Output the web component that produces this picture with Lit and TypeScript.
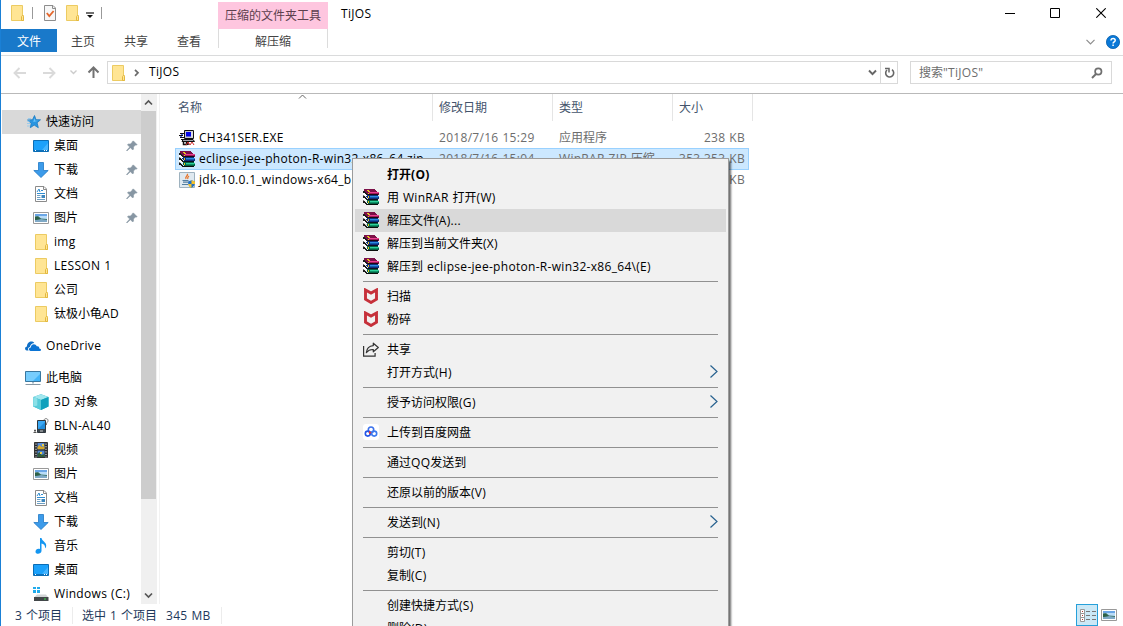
import { LitElement, html, svg, css, nothing } from "lit";
import { customElement } from "lit/decorators.js";
import { classMap } from "lit/directives/class-map.js";

const frame = (body: unknown, w = 16, h = 16) =>
  html`<svg width=${w} height=${h} viewBox="0 0 ${w} ${h}" fill="none">${body}</svg>`;

// Latin runs are tracked slightly wider than the Chinese glyphs beside them.
const text = (s: string) =>
  s.split(/([\x20-\x7e]+)/).map((part, i) => (i % 2 ? html`<span class="latin">${part}</span>` : part));

const latinStyles = css`
  .latin { letter-spacing: .3px; word-spacing: .5px; white-space: pre; }
`;

const folder = svg`<path d="M2.5 .5h11v10h1v5h-12z" fill="#ffe79c" stroke="#eccb62"/><path d="M3 1h10v9l-1 1v4H3z" fill="#ffe594"/><path d="M12.5 15.5v-4l1-1.2 1 1.2v4z" fill="#ffe594" stroke="#e3b83f"/>`;

const books = svg`
  <g shape-rendering="crispEdges">
    <path d="M1 0h11v1h1v1h1v1h2v3H5V5H4V4H3V3H2V2H1z" fill="#7c1048"/>
    <path d="M6 3h10v1H6z" fill="#e8408f"/><path d="M6 4h9v1H6z" fill="#a3185c"/>
    <path d="M5 5h10v1H5z" fill="#1a0a12"/>
    <path d="M3 6h12v1h1v3H5V9H4V8H3z" fill="#0c2f7c"/><path d="M7 7h9v1H7z" fill="#2b8ee0"/><path d="M7 8h8v1H7z" fill="#1558ae"/>
    <path d="M5 10h10v1H5z" fill="#0a0f22"/>
    <path d="M4 11h11v1h1v3H5v-1H4z" fill="#066144"/><path d="M7 12h9v1H7z" fill="#2fd09a"/><path d="M7 13h8v1H7z" fill="#0d9468"/>
    <path d="M4 15h11v1H4z" fill="#0a0f0c"/>
    <path d="M0 2h2v1h1v1h1v1h1v1H3V5H2V4H0zM0 7h2v1h1v1h1v1h1v1H3v-1H2V9H0zM0 12h2v1h1v1h1v2H3v-1H2v-1H0z" fill="#1c1c1c"/>
    <path d="M0 4h2v1h1v1h1v1H2V6H0zM0 9h2v1h1v1h1v1H2v-1H0z" fill="#fff"/>
    <path d="M0 6h1v1H0zM0 11h1v1H0z" fill="#777"/>
    <path d="M4 1h2v1H4zM5 2h2v1H5zM5 4h1v1H5zM5 7h1v2H5zM5 12h1v2H5z" fill="#e8c81e"/>
  </g>`;

const shield = svg`<path d="M2.500 2v9.200L8 14.500l5.500-3.300V2L8 5z" stroke="#c6303a" stroke-width="2.900" stroke-linejoin="miter"/>`;

const picture = svg`<path d="M.5 2.500h15v11H.5z" fill="#fff" stroke="#999"/><path d="M2 4h12v8H2z" fill="#b9dcf8"/><path d="M2 4h12v2H2z" fill="#6ba6e6"/><path d="m2 7 3-1 3 2.500 6 .5v1H2z" fill="#3c7463"/><path d="M2 10 8 9l6 1v2H2z" fill="#7fa9c6"/><path d="M2 6.500c4 0 4 2 6 2.500l-6 1z" fill="#2c6048"/>`;

const icons: Record<string, unknown> = {
  folder,
  books,
  shield,
  picture,
  star: svg`<path d="m9.500 1.500 1.500 4.200 4.500.1-3.400 3 1.200 4.900-4.100-2.600-3.900 2.600.9-4.500L2.500 6l5-.3z" fill="#2a95e0" stroke="#1b7cc4" stroke-width=".8"/><path d="M3 4.500h3M2 7h3M2 9.500h3M2 12h3" stroke="#8cc8f0" stroke-width=".8"/><path d="m9.300 4 1 2.700 3 .1-5 1.200z" fill="#6cc5fa"/>`,
  desktop: svg`<path d="M.5 2.500h15v11H.5z" fill="#1ba1fb" stroke="#0b6db5"/><path d="M9 12 15 5v7z" fill="#45b5ff"/><path d="M1 12.500h14" stroke="#0c72bd"/><path d="M2 12.500h1M11 12.500h1M13 12.500h1" stroke="#fff"/>`,
  download: svg`<path d="M5.500.5h5v8h4.700L8 15.500.8 8.500h4.700z" fill="#3c9bea" stroke="#2179c5" stroke-width=".8"/>`,
  document: svg`<path d="M2.500.5h8.500l2.500 2.500v12.500h-11z" fill="#fff" stroke="#8b8b8b"/><path d="M10.500.5v3h3" stroke="#8b8b8b"/><path d="m4 6 2-3 1 3M8 4.500h2M4 7.500h8" stroke="#2f8cd0"/><path d="M4 9.500h3.500M4 11.500h3.500M4 13.500h8" stroke="#6c9fc4"/><path d="M8.500 9h3.500v3H8.500z" fill="#3c86bd"/>`,
  cloud: svg`<path d="M1.800 12.500C-.8 12 -.3 8.600 2 8.500 2 4 7 2 9.300 5.100 6.500 5 5 7.500 5 9 3 9.300 2.600 11.300 3.600 12.500z" fill="#0f6fc6"/><path d="M5.600 13c-2.500-.3-2-3.400.2-3.500.2-3.800 4.700-4.600 6-1.200 2-.3 2.600 1 2.500 2.100 2.300.2 2.200 2.600.4 2.600z" fill="#0b74d4"/>`,
  computer: svg`<path d="M.5 1.500h15v10H.5z" fill="#43b4f8" stroke="#39779f"/><path d="m8 11 7-7V2H1v9z" fill="#77cdfd"/><path d="M7 12h2v1.500H7z" fill="#a9bdc9"/><path d="M.5 14.500h15" stroke="#8797a3"/>`,
  cube: svg`<path d="M8 .2 15.500 3v9.500L8 16 .3 12.500V3z" fill="#29b2c9"/><path d="M8 .2 15.500 3 8 6 .3 3z" fill="#a2e7ee"/><path d="M.3 3 8 6v10L.3 12.500z" fill="#57cbd9"/><path d="M8 6 15.500 3v9.500L8 16z" fill="#0fa0bc"/><path d="m.3 3 4 1.500v7l-4 1z" fill="#8be0e7"/>`,
  device: svg`<path d="M11 4V2.500C11 0 15 0 15 2.500c0 2-1.500 1.500-1.500 3.500v1" stroke="#777"/><path d="M4.500 2.500h8v12h-8z" fill="#3a444c" stroke="#30383f"/><path d="M5 3h7v8H5z" fill="#3aa8f4"/><path d="m5 11 7-7v7z" fill="#208cdb"/><path d="M7 13h3" stroke="#ccc"/><path d="M.5 14.500h3M2 11.500v3M1 12.500h2" stroke="#555"/>`,
  video: svg`<path d="M1.500.5h13v15h-13z" fill="#25282b" stroke="#333"/><path d="M4.500 1h7v6.300h-7z" fill="#5a8bd5"/><path d="M4.500 8.600h7V15h-7z" fill="#4f85ce"/><path d="m4.500 5 2-2 2 2 3-1v3.300h-7z" fill="#d6a72a"/><path d="m4.500 12 2-2 2 3 3-1v3h-7z" fill="#315c38"/><path d="M9 2h2v2H9zM7 10h2v2H7z" fill="#ebcf46"/><path d="M3 1.500v14M13 1.500v14" stroke="#fff" stroke-dasharray="1.200 1.400"/>`,
  music: svg`<path d="M7 0h1.500c.4 3.200 5 4 4.700 8-.2 1.500-.8 2-1.200 2.500.5-3-1-4.300-3.500-5V13c-.3 3.500-6 3.700-6 .7C2.500 11 5 10.200 7 11z" fill="#1496f1"/>`,
  drive: svg`<path d="M0 1h3v2H0zm4 0h3v2H4zM0 4h3v3H0zm4 0h3v3H4z" fill="#20abec"/><path d="M4 8.500h9l2 2.500H1.500z" fill="#d1d4d6"/><path d="M1 11h14.500v4H1z" fill="#424749"/><path d="M11 13h2" stroke="#39dd48"/>`,
  setup: svg`<path d="M5.500.5h9v8h-9z" fill="#c4c6ce" stroke="#111"/><path d="M7 2h5v4.500H7z" fill="#0505e6"/><path d="M12.500 1.500h1v6h-1z" fill="#eee"/><path d="M4 9.500h10l1.500 2H3z" fill="#9fa2ac" stroke="#111"/><path d="M1 3.500h4M0 5.500h4M1 7.500h4M2 9.500h3" stroke="#111"/><path d="M2 4.500h2M1 6.500h2" stroke="#4e6cdd"/><path d="M4.500 12v2.500h3V12M9 11v4" stroke="#111" stroke-width="1.500"/><path d="m7 15 2-3 2 3 2-3 2 3" stroke="#d32b2b"/>`,
  java: svg`<path d="M.5.500h15v15H.5z" fill="#dfe9f0" stroke="#9eb2bf"/><path d="M8 2c2 1.500-2.500 2.500-1 5M10 4c-1.500 1-1.700 1.500-1.200 3" stroke="#e7762d" stroke-width="1.300"/><path d="M3.500 8.500h6M4 10.200h5M3 12.500h6" stroke="#557f9f" stroke-width="1.200"/><path d="m9 9.500 3.500-1.200L16 9.500c0 3.500-1 5-3.500 6.500C10 14.500 9 13 9 9.500z" fill="#2470c1"/><path d="M12.500 8.300 16 9.500V12h-3.500zM9.200 12h3.300v4c-2-1-3-2-3.300-4z" fill="#f3c22b"/>`,
  share: svg`<path d="M.6 5v10.200h11.500V12" stroke="#333" stroke-width="1.200"/><path d="M10.300 2.200 15.300 6.500l-5 4.300V8.500C7 8.300 5 9.500 3.300 11.700 3.700 7.700 6 4.900 10.300 4.600z" stroke="#333" stroke-width="1.200" stroke-linejoin="round"/>`,
  baidu: svg`<rect width="16" height="16" rx="3" fill="#fff"/><g stroke-width="1.600"><circle cx="8" cy="5.700" r="2.700" stroke="#3c72ec"/><circle cx="4.800" cy="9.600" r="2.500" stroke="#2456e7"/><circle cx="11.200" cy="9.600" r="2.500" stroke="#3b7af0"/></g><path d="m6.400 7.500 1.500 1-1.300 1.300z" fill="#e2383f" stroke="#e2383f"/>`,
  check: svg`<path d="M2.500.5h8.500l2.500 2.500v12.500h-11z" fill="#f7f7f7" stroke="#8d8d8d"/><path d="M10.500.5v3h3" stroke="#8d8d8d"/><path d="m4.800 8 2.500 3 4.300-5" stroke="#e4662b" stroke-width="1.800"/>`,
  pin: svg`<path d="m9.500 3 3.700 3.700-1.200.5-.6-.2-1.900 2 .1 2.100-.9.900-2.300-2.300L3 13l-.5-.5L5.700 9 3.400 6.800l1-.9 2 .1 2-2-.1-.6z" fill="#8796a3" stroke="#8796a3" stroke-width=".5"/>`,
};

const icon = (name?: string) => (name ? frame(icons[name]) : html`<span class="noicon"></span>`);

interface NavItem { label: string; icon: string; root?: boolean; pinned?: boolean; gap?: boolean; current?: boolean }
const NAV: NavItem[] = [
  { label: "快速访问", icon: "star", root: true, current: true },
  { label: "桌面", icon: "desktop", pinned: true },
  { label: "下载", icon: "download", pinned: true },
  { label: "文档", icon: "document", pinned: true },
  { label: "图片", icon: "picture", pinned: true },
  { label: "img", icon: "folder" },
  { label: "LESSON 1", icon: "folder" },
  { label: "公司", icon: "folder" },
  { label: "钛极小龟AD", icon: "folder" },
  { label: "OneDrive", icon: "cloud", root: true, gap: true },
  { label: "此电脑", icon: "computer", root: true, gap: true },
  { label: "3D 对象", icon: "cube" },
  { label: "BLN-AL40", icon: "device" },
  { label: "视频", icon: "video" },
  { label: "图片", icon: "picture" },
  { label: "文档", icon: "document" },
  { label: "下载", icon: "download" },
  { label: "音乐", icon: "music" },
  { label: "桌面", icon: "desktop" },
  { label: "Windows (C:)", icon: "drive" },
];

const FILES = [
  { name: "CH341SER.EXE", icon: "setup", date: "2018/7/16 15:29", type: "应用程序", size: "238 KB" },
  { name: "eclipse-jee-photon-R-win32-x86_64.zip", icon: "books", date: "2018/7/16 15:04", type: "WinRAR ZIP 压缩", size: "353,353 KB", selected: true },
  { name: "jdk-10.0.1_windows-x64_bin.exe", icon: "java", date: "", type: "", size: "KB" },
];

interface MenuItem { label: string; icon?: string; bold?: boolean; hot?: boolean; sub?: boolean }
const MENU: (MenuItem | null)[] = [
  { label: "打开(O)", bold: true },
  { label: "用 WinRAR 打开(W)", icon: "books" },
  { label: "解压文件(A)...", icon: "books", hot: true },
  { label: "解压到当前文件夹(X)", icon: "books" },
  { label: "解压到 eclipse-jee-photon-R-win32-x86_64\\(E)", icon: "books" },
  null,
  { label: "扫描", icon: "shield" },
  { label: "粉碎", icon: "shield" },
  null,
  { label: "共享", icon: "share" },
  { label: "打开方式(H)", sub: true },
  null,
  { label: "授予访问权限(G)", sub: true },
  null,
  { label: "上传到百度网盘", icon: "baidu" },
  null,
  { label: "通过QQ发送到" },
  null,
  { label: "还原以前的版本(V)" },
  null,
  { label: "发送到(N)", sub: true },
  null,
  { label: "剪切(T)" },
  { label: "复制(C)" },
  null,
  { label: "创建快捷方式(S)" },
  { label: "删除(D)" },
];

@customElement("context-menu")
class ContextMenu extends LitElement {
  static styles = [latinStyles, css`
    :host { display: block; box-sizing: border-box; width: 377px; padding: 4px 2px; border: 1px solid #9b9b9b; background: #f1f1f1; box-shadow: 2px 3px 2px 0 rgba(0, 0, 0, .58); color: #000; }
    .item { display: flex; align-items: center; gap: 8px; height: 23px; padding: 0 8px; white-space: nowrap; }
    .hot { background: #d9d9d9; }
    .bold { font-weight: 700; }
    .label { flex: 1; }
    .noicon { width: 16px; }
    .line { height: 1px; margin: 3px 8px; background: #919191; }
    svg { display: block; flex: none; margin-bottom: 1px; }
  `];
  render() {
    return MENU.map((m) =>
      m === null
        ? html`<div class="line"></div>`
        : html`<div class=${classMap({ item: true, hot: !!m.hot, bold: !!m.bold })}>
            ${icon(m.icon)}<span class="label">${text(m.label)}</span>
            ${m.sub ? frame(svg`<path d="m1.500 .5 6.500 6-6.500 6" stroke="#27618f" stroke-width="1.200"/>`, 9, 14) : nothing}
          </div>`,
    );
  }
}

@customElement("nav-pane")
class NavPane extends LitElement {
  static styles = [latinStyles, css`
    :host { display: flex; width: 158px; border-right: 1px solid #f2f2f2; overflow: hidden; }
    .tree { width: 140px; padding: 16px 0 0 1px; box-sizing: border-box; overflow: hidden; flex: none; }
    .row { display: flex; align-items: center; gap: 5px; height: 24px; padding: 0 1px 0 31px; white-space: nowrap; }
    .root { padding-left: 23px; }
    .current { background: #d9d9d9; }
    .gap { margin-top: 8px; }
    .label { flex: 1; }
    .bar { display: flex; flex-direction: column; width: 16px; background: #f0f0f0; }
    .end { display: flex; width: 15px; height: 17px; align-items: center; justify-content: center; }
    .thumb { height: 388px; width: 15px; background: #cdcdcd; }
    .space { flex: 1; }
    svg { display: block; flex: none; }
  `];
  render() {
    return html`
      <div class="tree">
        ${NAV.map((n) => html`<div class=${classMap({ row: true, root: !!n.root, current: !!n.current, gap: !!n.gap })}>
          ${icon(n.icon)}<span class="label">${text(n.label)}</span>${n.pinned ? icon("pin") : nothing}
        </div>`)}
      </div>
      <div class="bar">
        <div class="end">${frame(svg`<path d="M1 5.500 4.500 2 8 5.500" stroke="#555" stroke-width="1.700"/>`, 9, 7)}</div>
        <div class="thumb"></div>
        <div class="space"></div>
        <div class="end">${frame(svg`<path d="M1 1.500 4.500 5 8 1.500" stroke="#555" stroke-width="1.700"/>`, 9, 7)}</div>
      </div>`;
  }
}

@customElement("file-list")
class FileList extends LitElement {
  static styles = [latinStyles, css`
    :host { display: block; flex: 1; padding-left: 15px; }
    .head { position: relative; display: grid; grid-template-columns: 258px 120px 120px 80px; height: 27px; color: #44546c; margin-bottom: 6px; }
    .head span { border-right: 1px solid #e5e5e5; padding-left: 6px; line-height: 27px; }
    .head span:first-child { padding-left: 3px; }
    .sort { position: absolute; left: 123px; top: 0; display: block; }
    .row { display: grid; grid-template-columns: 20px 240px 120px 113px 73px; align-items: center; width: 574px; height: 21px; padding: 0 4px; box-sizing: border-box; color: #6d6d6d; white-space: nowrap; }
    .selected { height: 22px; margin-bottom: -1px; background: #cce8ff; outline: 1px solid #99d1ff; outline-offset: -1px; }
    .name { color: #000; }
    .size { text-align: right; }
    svg { display: block; }
  `];
  render() {
    return html`
      <div class="head">
        <span>名称</span><span>修改日期</span><span>类型</span><span>大小</span>
        <div class="sort">${frame(svg`<path d="M1 4.500 4.500 1 8 4.500" stroke="#666"/>`, 9, 6)}</div>
      </div>
      ${FILES.map((f) => html`<div class=${classMap({ row: true, selected: !!f.selected })}>
        ${icon(f.icon)}<span class="name">${text(f.name)}</span><span>${text(f.date)}</span>
        <span>${text(f.type)}</span><span class="size">${text(f.size)}</span>
      </div>`)}`;
  }
}

@customElement("app-root")
class AppRoot extends LitElement {
  static styles = [latinStyles, css`
    :host { position: relative; display: flex; flex-direction: column; box-sizing: border-box; width: 1123px; height: 626px; overflow: hidden; border-left: 1px solid #1a80d6; background: #fff; color: #000; font: 12px/16px "Open Sans", "Noto Sans CJK SC", sans-serif; }
    svg { display: block; flex: none; }
    .ribbon { display: flex; height: 55px; border-bottom: 1px solid #dadbdc; }
    .left { width: 217px; }
    .quick { display: flex; align-items: center; height: 26px; padding-left: 8px; margin-bottom: 3px; }
    .sep { width: 1px; height: 12px; background: #999; }
    .s1 { margin: 0 9px 0 7px; }
    .g2 { margin: 0 6px; }
    .s2 { margin-left: 7px; }
    .drop { padding: 3px 0 0; }
    .tabs { display: flex; color: #444; }
    .tab { box-sizing: border-box; width: 53px; padding-right: 1px; text-align: center; line-height: 25px; height: 23px; }
    .file { width: 56px; background: #1979ca; color: #fff; padding: 0; }
    .tool { width: 110px; text-align: center; color: #444; padding-top: 2px; }
    .pink { height: 27px; line-height: 27px; background: #fec6df; color: #5c404e; }
    .extract { height: 19px; line-height: 26px; border: solid #dcdcdc; border-width: 0 1px; }
    .title { flex: 1; padding: 6px 0 0 13px; }
    .right { width: 124px; }
    .controls { display: flex; align-items: center; justify-content: space-between; height: 26px; padding: 0 17px 0 6px; }
    .help { display: flex; justify-content: flex-end; align-items: center; gap: 11px; height: 32px; padding-right: 3px; }
    .nav { display: flex; align-items: center; height: 37px; border-bottom: 1px solid #b9b9b9; }
    .arrows { display: flex; align-items: center; width: 106px; box-sizing: border-box; padding: 0 0 4px 12px; }
    .a2 { margin-left: 15px; } .a3 { margin-left: 12px; } .a4 { margin-left: 10px; }
    .box { display: flex; align-items: center; box-sizing: border-box; height: 23px; border: 1px solid #d9d9d9; margin-top: -4px; }
    .address { width: 791px; padding-left: 2px; }
    .crumb { margin: 0 9px 0 8px; }
    .path { flex: 1; margin-top: -1px; }
    .refresh { display: flex; align-items: center; justify-content: center; width: 16px; height: 21px; border-left: 1px solid #d9d9d9; margin-left: 3px; }
    .search { width: 202px; margin-left: 12px; padding: 0 8px; justify-content: space-between; color: #6d6d6d; }
    .body { display: flex; height: 510px; }
    .status { display: flex; align-items: center; height: 22px; padding-left: 14px; color: #1e395b; white-space: nowrap; }
    .status > span { padding-top: 1px; }
    .count { width: 57px; border-right: 1px solid #ececec; }
    .status > .picked { width: 84px; padding-left: 9px; }
    .bytes { width: 55px; border-right: 1px solid #ececec; }
    .views { display: flex; align-items: flex-start; gap: 3px; margin-left: auto; padding-right: 6px; height: 22px; }
    .details { box-sizing: border-box; width: 22px; height: 22px; border: 1px solid #26a0da; background: #cbe8f6; padding: 3px 2px; }
    .large { padding-top: 3px; }
    .menu { position: absolute; left: 351px; top: 158px; }
  `];
  render() {
    return html`
      <div class="ribbon">
        <div class="left">
          <div class="quick">
            ${frame(folder)}<i class="sep s1"></i>${icon("check")}
            <span class="g2">${frame(folder)}</span>
            <span class="drop">${frame(svg`<path d="M0 1h8" stroke="#111" stroke-width="1.200"/><path d="M1 3h6L4 6z" fill="#111"/>`, 8, 6)}</span><i class="sep s2"></i>
          </div>
          <div class="tabs">
            <div class="tab file">文件</div><div class="tab">主页</div><div class="tab">共享</div><div class="tab">查看</div>
          </div>
        </div>
        <div class="tool"><div class="pink">压缩的文件夹工具</div><div class="extract">解压缩</div></div>
        <div class="title">${text("TiJOS")}</div>
        <div class="right">
          <div class="controls">
            ${frame(svg`<path d="M0 5.500h10" stroke="#000"/>`, 10, 10)}
            ${frame(svg`<path d="M.5.500h9v9h-9z" stroke="#000"/>`, 11, 10)}
            ${frame(svg`<path d="m.3.300 9.400 9.400M9.700.300.3 9.700" stroke="#000" stroke-width="1.100"/>`, 10, 10)}
          </div>
          <div class="help">
            ${frame(svg`<path d="M.5.800 4.500 4.800 8.500.800" stroke="#8d8d8d" stroke-width="1.200"/>`, 9, 6)}
            ${frame(svg`<circle cx="7" cy="7" r="6.600" fill="#0a78d7" stroke="#0860ac" stroke-width=".8"/><path d="M5 5.400c0-2.600 4.200-2.500 4.200 0C9.200 7 7.100 6.900 7.100 8.600M7.100 9.600v1.500" stroke="#fff" stroke-width="1.500"/>`, 14, 14)}
          </div>
        </div>
      </div>
      <div class="nav">
        <div class="arrows">
          ${frame(svg`<path d="M13 6H2M6.500 1 1.500 6l5 5" stroke="#dadada" stroke-width="1.900"/>`, 14, 12)}
          <span class="a2">${frame(svg`<path d="M1 6h11M7.500 1l5 5-5 5" stroke="#dadada" stroke-width="1.900"/>`, 16, 12)}</span>
          <span class="a3">${frame(svg`<path d="m.5.500 3 3 3-3" stroke="#ccc" stroke-width="1.400"/>`, 7, 5)}</span>
          <span class="a4">${frame(svg`<path d="M6.500 12V2M1.500 6.500l5-5 5 5" stroke="#727272" stroke-width="2"/>`, 13, 13)}</span>
        </div>
        <div class="box address">
          ${frame(folder)}
          <span class="crumb">${frame(svg`<path d="m1 .8 3 3-3 3" stroke="#6b6b6b" stroke-width="1.700"/>`, 6, 8)}</span>
          <span class="path">${text("TiJOS")}</span>
          ${frame(svg`<path d="m1 1.500 3.500 3.700L8 1.500" stroke="#666" stroke-width="1.900"/>`, 9, 7)}
          <span class="refresh">${frame(svg`<path d="M8 2.700A4 4 0 1 1 3 3" stroke="#666" stroke-width="1.600"/><path d="M1 1.500h4v4" stroke="#666" stroke-width="1.500"/>`, 11, 12)}</span>
        </div>
        <div class="box search"><span>${text('搜索"TiJOS"')}</span>
          ${frame(svg`<circle cx="7.300" cy="4.500" r="3.200" stroke="#6f6f6f" stroke-width="1.700"/><path d="M5 7 1 11" stroke="#6f6f6f" stroke-width="2"/>`, 12, 12)}
        </div>
      </div>
      <div class="body"><nav-pane></nav-pane><file-list></file-list></div>
      <div class="status">
        <span class="count">${text("3 个项目")}</span><span class="picked">${text("选中 1 个项目")}</span><span class="bytes">${text("345 MB")}</span>
        <div class="views">
          <div class="details">${frame(svg`<path d="M1.500 1.500h4v4h-4zM1.500 5.500h4v4h-4zM1.500 9.500h4v4h-4z" fill="#fff" stroke="#999"/><path d="M3 3.500h1M3 7.500h1M3 11.500h1" stroke="#b13b32"/><path d="M7 3.500h4M13 3.500h4M7 7.500h4M13 7.500h4M7 11.500h4M13 11.500h4" stroke="#777"/>`, 17, 14)}</div>
          <div class="large">${frame(picture)}</div>
        </div>
      </div>
      <context-menu class="menu"></context-menu>`;
  }
}
